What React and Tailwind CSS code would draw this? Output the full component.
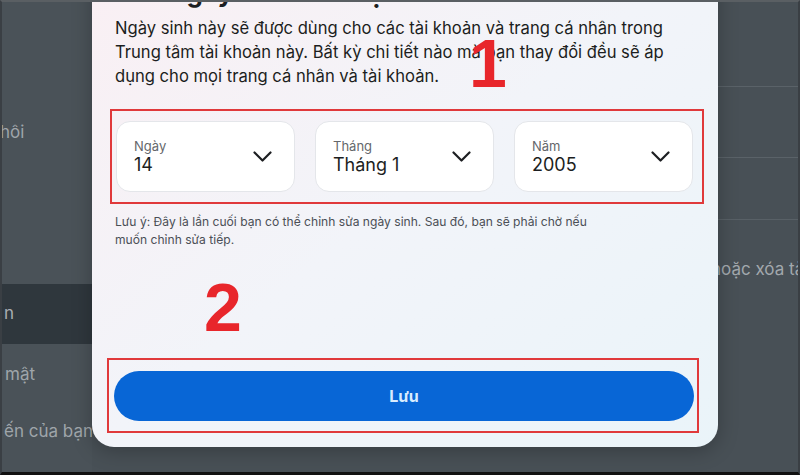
import React from "react";

function Chevron() {
  return (
    <svg width="19" height="11" viewBox="0 0 19 11" fill="none">
      <polyline points="1.5,1.5 9.5,9.5 17.5,1.5" stroke="#1c1e21" strokeWidth="2.2" strokeLinecap="round" strokeLinejoin="round" />
    </svg>
  );
}

function Select({ label, value }) {
  return (
    <div className="flex h-[71px] w-[179px] items-center justify-between rounded-[14px] border border-[#e4e6ea] bg-white pl-[17px] pr-[22px]">
      <div className="flex flex-col pt-[2px]">
        <span className="text-[13px] leading-[15px] text-[#65676b]">{label}</span>
        <span className="text-[18px] leading-[22px] text-[#1c1e21]">{value}</span>
      </div>
      <Chevron />
    </div>
  );
}

export default function App() {
  return (
    <div className="relative h-[475px] w-[800px] overflow-hidden border-x-2 border-t-2 border-b-[3px] border-x-[#3a3f44] border-t-[#5a5f63] border-b-[#111] bg-[#4a5258] font-['Inter','Noto_Sans',sans-serif]">
      {/* background page */}
      <div className="flex h-full">
        <div className="flex w-[90px] flex-col text-[17px] text-[#9fa5aa]">
          <div className="h-[118px]" />
          <div className="h-[36px] overflow-hidden whitespace-nowrap">
            <span className="ml-[-2px]">hôi</span>
          </div>
          <div className="h-[128px]" />
          <div className="flex h-[60px] items-center overflow-hidden whitespace-nowrap bg-[#2f373d] text-[#a9aeb3]">
            <span className="ml-[2px]">n</span>
          </div>
          <div className="h-[18px]" />
          <div className="h-[30px] overflow-hidden whitespace-nowrap">
            <span className="ml-[3px]">mật</span>
          </div>
          <div className="h-[27px]" />
          <div className="h-[30px] overflow-hidden whitespace-nowrap">
            <span className="ml-[2px]">ến của bạn</span>
          </div>
        </div>
        <div className="flex flex-1 flex-col bg-[#485056]">
          <div className="h-[85px] border-b border-[#5a6268]" />
          <div className="h-[71px] border-b border-[#5a6268]" />
          <div className="h-[62px] border-b border-[#586066]" />
          <div className="flex h-[100px] items-center overflow-hidden whitespace-nowrap pl-[619px] text-[17px] text-[#a2a8ad]">
            <span>hoặc xóa tài khoản</span>
          </div>
        </div>
      </div>

      {/* modal */}
      <div className="absolute left-[90px] top-[-62px] flex h-[507px] w-[626px] flex-col rounded-[22px] bg-gradient-to-br from-[#faeff3] via-[#f2f4f9] to-[#eaf4f9] px-[23px] shadow-[0_4px_20px_rgba(0,0,0,0.25)]">
        <div className="mt-[36px] whitespace-nowrap text-[26px] font-bold leading-[34px] text-[#1c1e21]">
          Sửa ngày sinh của bạn
        </div>
        <p className="mt-[6px] text-[16.6px] leading-[24px] text-[#1c1e21]">
          Ngày sinh này sẽ được dùng cho các tài khoản và trang cá nhân trong Trung tâm tài khoản này. Bất kỳ chi tiết nào mà bạn thay đổi đều sẽ áp dụng cho mọi trang cá nhân và tài khoản.
        </p>
        <div className="mt-[21px] ml-[-5px] flex h-[95px] w-[594px] items-center justify-between border-2 border-[#e0393b] pl-[4px] pr-[9px]">
          <Select label="Ngày" value="14" />
          <Select label="Tháng" value="Tháng 1" />
          <Select label="Năm" value="2005" />
        </div>
        <p className="mt-[9px] max-w-[485px] text-[12.1px] leading-[18px] text-[#4b4f56]">
          Lưu ý: Đây là lần cuối bạn có thể chỉnh sửa ngày sinh. Sau đó, bạn sẽ phải chờ nếu muốn chỉnh sửa tiếp.
        </p>
        <div className="flex-1" />
        <div className="mb-[14px] ml-[-8px] flex h-[75px] w-[592px] items-end border-2 border-[#e0393b] pb-[10px] pl-[5px]">
          <button className="flex h-[50px] w-[580px] items-center justify-center rounded-full bg-[#0866d6] text-[16px] font-bold text-[#d8ecff]">
            Lưu
          </button>
        </div>
      </div>

      {/* annotation numbers */}
      <div className="absolute left-[467px] top-[27px] text-[68px] font-black leading-[68px] text-[#e8262b] font-['Liberation_Sans',sans-serif]">
        1
      </div>
      <div className="absolute left-[202px] top-[271px] text-[68px] font-black leading-[68px] text-[#e8262b] font-['Liberation_Sans',sans-serif]">
        2
      </div>
    </div>
  );
}
